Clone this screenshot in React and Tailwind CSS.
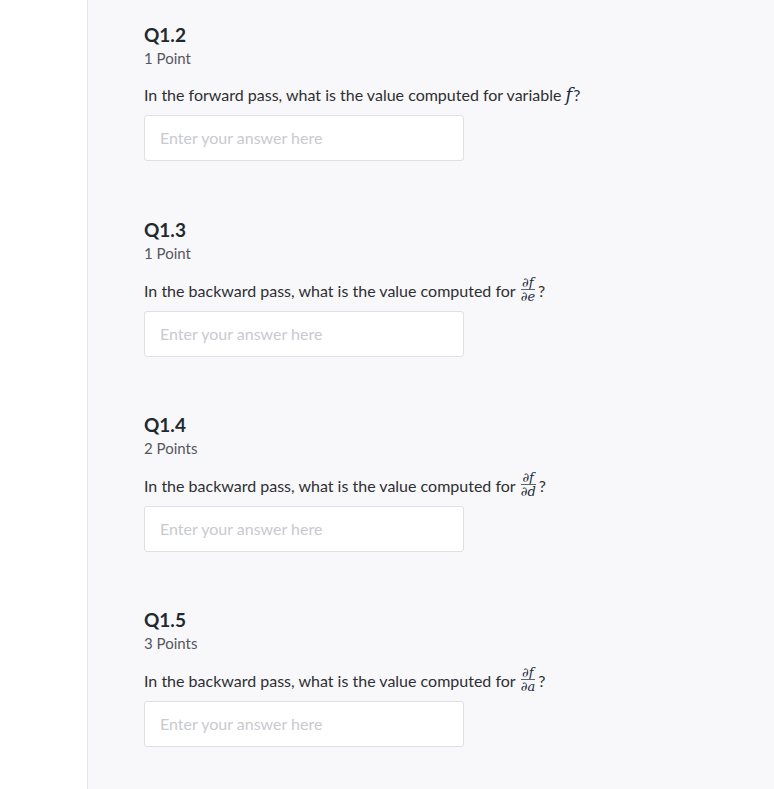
import React from "react";

const sans = { fontFamily: "Lato, 'Open Sans', sans-serif" };
const serif = { fontFamily: "'DejaVu Serif', 'Liberation Serif', serif" };

function Frac({ bottom }) {
  return (
    <span className="inline-flex flex-col items-center ml-[5px] mr-[3px] relative top-[-1px] leading-none text-[#1c2a3a]" style={serif}>
      <span className="text-[13px] italic leading-[13px]">∂f</span>
      <span className="block w-full h-px bg-[#5a6474]"></span>
      <span className="text-[13px] italic leading-[13px]">∂{bottom}</span>
    </span>
  );
}

function Question({ num, points, frac, children }) {
  return (
    <div className={frac ? "pt-[23px] pb-[33px]" : "pt-[23px] pb-[34px]"}>
      <div className="text-[19px] font-bold leading-[24px] text-[#1e2a30]">{num}</div>
      <div className="text-[15px] leading-[22px] text-[#55575e]">{points}</div>
      <div className={(frac ? "h-[25px] " : "h-[24px] ") + "mt-[14px] text-[16px] leading-[24px] text-[#2e2f33] flex items-center"}>{children}</div>
      <div className="mt-[8px] w-[320px] h-[46px] bg-white border border-[#dfdfe6] rounded-[3px] flex items-center px-[15px] text-[16px] text-[#c9c9d0]">
        Enter your answer here
      </div>
    </div>
  );
}

export default function App() {
  return (
    <div className="flex w-[774px] h-[789px] overflow-hidden bg-[#f8f8fa]" style={sans}>
      <div className="w-[88px] shrink-0 bg-white border-r border-[#e4e4e8]"></div>
      <div className="flex-1 pl-[56px]">
        <Question num="Q1.2" points="1 Point">
          <span>In the forward pass, what is the value computed for variable&nbsp;</span>
          <span className="italic text-[18px] text-[#1c2a3a] mr-[1px]" style={serif}>f</span>
          <span>?</span>
        </Question>
        <Question num="Q1.3" points="1 Point" frac>
          <span>In the backward pass, what is the value computed for</span>
          <Frac bottom="e" />
          <span>?</span>
        </Question>
        <Question num="Q1.4" points="2 Points" frac>
          <span>In the backward pass, what is the value computed for</span>
          <Frac bottom="d" />
          <span>?</span>
        </Question>
        <Question num="Q1.5" points="3 Points" frac>
          <span>In the backward pass, what is the value computed for</span>
          <Frac bottom="a" />
          <span>?</span>
        </Question>
      </div>
    </div>
  );
}
